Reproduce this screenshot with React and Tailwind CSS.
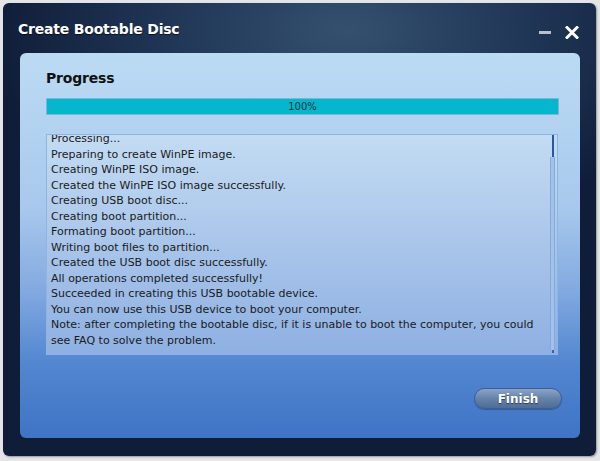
import React from 'react';

const lines = [
  'Processing...',
  'Preparing to create WinPE image.',
  'Creating WinPE ISO image.',
  'Created the WinPE ISO image successfully.',
  'Creating USB boot disc...',
  'Creating boot partition...',
  'Formating boot partition...',
  'Writing boot files to partition...',
  'Created the USB boot disc successfully.',
  'All operations completed successfully!',
  'Succeeded in creating this USB bootable device.',
  'You can now use this USB device to boot your computer.',
  'Note: after completing the bootable disc, if it is unable to boot the computer, you could see FAQ to solve the problem.',
];

const App = () => {
  return (
    <div className="w-[600px] h-[461px] bg-[#e3e5e8] p-[3px] font-['DejaVu_Sans',sans-serif]">
      {/* Window frame */}
      <div className="w-[593px] h-[453px] rounded-[6px] flex flex-col bg-[radial-gradient(ellipse_60%_45%_at_58%_6%,#35506f_0%,#22395a_45%,#0f1d38_100%)] shadow-[1px_1px_2px_rgba(0,0,0,0.35)]">
        {/* Title bar */}
        <div className="h-[50px] flex items-center justify-between pl-[15px] pr-[17px]">
          <span className="text-white font-bold text-[14px] mt-[3px] tracking-[-0.2px] [text-shadow:0_1px_1px_rgba(0,0,0,0.6)]">
            Create Bootable Disc
          </span>
          <div className="flex items-center gap-[14px] mt-[9px]">
            <div className="w-[12px] h-[3px] bg-[#b8c0cc]"></div>
            <svg width="14" height="13" viewBox="0 0 14 13">
              <path d="M2 1.5 L12 11.5 M12 1.5 L2 11.5" stroke="#ffffff" strokeWidth="3" strokeLinecap="square" />
            </svg>
          </div>
        </div>

        {/* Content panel */}
        <div className="ml-[17px] w-[560px] h-[385px] rounded-[6px] bg-[linear-gradient(to_bottom,#bbdbf4_0%,#a8c9ed_40%,#82a9e0_62%,#5387d0_80%,#3f74c6_100%)] pl-[26px] pt-[16px] flex flex-col">
          <div className="text-[14px] font-bold text-[#111] tracking-[-0.2px] leading-[18px]">Progress</div>

          {/* Progress bar */}
          <div className="mt-[11px] w-[513px] h-[17px] bg-[#04b7cd] border border-[#7fb3d8] rounded-[1px] flex items-center justify-center">
            <span className="text-[10px] text-[#10303a]">100%</span>
          </div>

          {/* Log box */}
          <div className="mt-[19px] w-[512px] h-[221px] border border-[#8fb4e4] bg-[linear-gradient(to_bottom,#c3dcf3_0%,#a9c5ea_50%,#8eb0e2_100%)] flex overflow-hidden">
            <div className="flex-1 pl-[4px] pr-[8px] -mt-[4px] text-[11px] leading-[15.5px] text-[#1b1b1b]">
              {lines.map((l, i) => (
                <div key={i}>{l}</div>
              ))}
            </div>
            {/* Scrollbar */}
            <div className="w-[7px] mr-[1px] flex flex-col items-center">
              <div className="w-[2px] h-[22px] bg-[#2d55a6]"></div>
              <div className="w-[5px] flex-1 bg-[#a3c2e8] border-x border-[#86a8dc]"></div>
              <div className="w-[2px] h-[3px] bg-[#3862ad] mb-[1px]"></div>
            </div>
          </div>

          {/* Footer */}
          <div className="flex justify-end pr-[18px] mt-[33px]">
            <button className="w-[88px] h-[21px] rounded-full border border-[#3b5f92] bg-[linear-gradient(to_bottom,#8aa4c6_0%,#6582ab_50%,#4f6c96_100%)] text-white text-[12px] font-bold [text-shadow:0_1px_1px_rgba(0,0,0,0.5)] shadow-[0_1px_1px_rgba(0,0,0,0.25)]">
              Finish
            </button>
          </div>
        </div>
      </div>
    </div>
  );
};

export default App;
